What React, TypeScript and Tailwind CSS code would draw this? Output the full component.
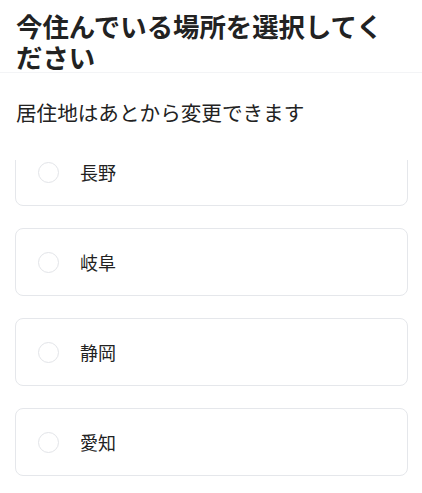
const prefectures = ['長野', '岐阜', '静岡', '愛知'];

function RadioRow({ label }: { label: string }) {
  return (
    <div className="flex h-[68px] items-center rounded-lg border border-[#e5e7eb] bg-white pl-[22px]">
      <span className="h-[21px] w-[21px] shrink-0 rounded-full border border-[#e2e4e8]"></span>
      <span className="ml-[21px] text-[18px] leading-none text-[#222]">{label}</span>
    </div>
  );
}

export default function App() {
  return (
    <div
      className="h-[493px] w-[422px] overflow-hidden bg-white text-[#222]"
      style={{ fontFamily: '"Noto Sans CJK JP", "Noto Sans", sans-serif' }}
    >
      {/* Header */}
      <div className="border-b border-[#f3f4f6] pl-4 pr-4 pt-[10px]">
        <h1 className="text-[26.4px] font-bold leading-[31px]">今住んでいる場所を選択してください</h1>
      </div>

      {/* Subtitle */}
      <p className="px-4 pt-[25px] text-[20.6px] leading-[28px]">居住地はあとから変更できます</p>

      {/* Scrolled list */}
      <div className="mt-[34px] h-[333px] overflow-hidden">
        <div className="-mt-[22px] flex flex-col gap-[22px] pl-[15px] pr-[14px]">
          {prefectures.map((p) => (
            <RadioRow key={p} label={p} />
          ))}
        </div>
      </div>
    </div>
  );
}
